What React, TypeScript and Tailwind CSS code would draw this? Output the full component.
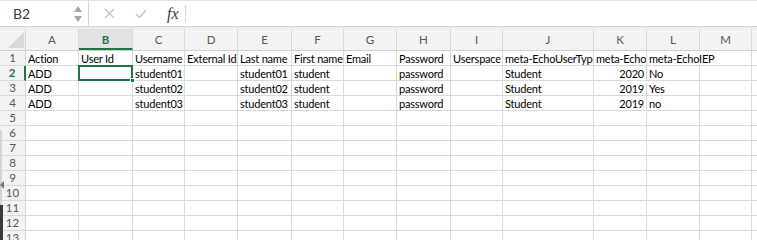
import React from 'react'

const cols = [
  { key: 'A', w: 53 },
  { key: 'B', w: 54 },
  { key: 'C', w: 52 },
  { key: 'D', w: 53 },
  { key: 'E', w: 54 },
  { key: 'F', w: 52 },
  { key: 'G', w: 53 },
  { key: 'H', w: 54 },
  { key: 'I', w: 52 },
  { key: 'J', w: 91 },
  { key: 'K', w: 53 },
  { key: 'L', w: 53 },
  { key: 'M', w: 52 },
  { key: 'N', w: 60 },
]

type Cell = { v: string; right?: boolean; spill?: boolean }

const data: Cell[][] = [
  [
    { v: 'Action' }, { v: 'User Id' }, { v: 'Username' }, { v: 'External Id' }, { v: 'Last name' },
    { v: 'First name' }, { v: 'Email' }, { v: 'Password' }, { v: 'Userspace' },
    { v: 'meta-EchoUserType' }, { v: 'meta-EchoGrade' }, { v: 'meta-EchoIEP', spill: true },
  ],
  [
    { v: 'ADD' }, { v: '' }, { v: 'student01' }, { v: '' }, { v: 'student01' }, { v: 'student' },
    { v: '' }, { v: 'password' }, { v: '' }, { v: 'Student' }, { v: '2020', right: true }, { v: 'No' },
  ],
  [
    { v: 'ADD' }, { v: '' }, { v: 'student02' }, { v: '' }, { v: 'student02' }, { v: 'student' },
    { v: '' }, { v: 'password' }, { v: '' }, { v: 'Student' }, { v: '2019', right: true }, { v: 'Yes' },
  ],
  [
    { v: 'ADD' }, { v: '' }, { v: 'student03' }, { v: '' }, { v: 'student03' }, { v: 'student' },
    { v: '' }, { v: 'password' }, { v: '' }, { v: 'Student' }, { v: '2019', right: true }, { v: 'no' },
  ],
]

const ROWS = 13

function FormulaBar() {
  return (
    <div className="flex h-[27px] border-b border-t border-[#d6d6d6] border-t-[#e4e4e4] bg-white">
      <div className="relative flex w-[89px] shrink-0 items-center border-r border-[#d6d6d6] pl-[13px] text-[14px] text-[#3a3a3a]">
        B2
        <div className="absolute right-[6px] top-[5px] flex flex-col gap-[4px]">
          <svg width="8" height="6" viewBox="0 0 8 6"><path d="M4 0 L8 6 L0 6 Z" fill="#a8a8a8" /></svg>
          <svg width="8" height="6" viewBox="0 0 8 6"><path d="M0 0 L8 0 L4 6 Z" fill="#a8a8a8" /></svg>
        </div>
      </div>
      <div className="flex items-center">
        <svg className="ml-[15px]" width="11" height="11" viewBox="0 0 11 11">
          <path d="M1 1 L10 10 M10 1 L1 10" stroke="#c4c4c4" strokeWidth="1.4" />
        </svg>
        <svg className="ml-[20px]" width="12" height="10" viewBox="0 0 12 10">
          <path d="M1 5 L4.5 8.5 L11 1" stroke="#c4c4c4" strokeWidth="1.4" fill="none" />
        </svg>
        <span className="ml-[20px] text-[16px] italic text-[#3a3a3a]" style={{ fontFamily: '"Liberation Serif", serif' }}>
          fx
        </span>
        <div className="ml-[6px] h-[17px] w-px bg-[#d6d6d6]" />
      </div>
    </div>
  )
}

function HeaderRow() {
  return (
    <div className="flex h-[22px] border-b border-[#cfcfcf] bg-[#f3f3f3]">
      <div className="relative w-[26px] shrink-0 border-r border-[#d4d4d4]">
        <svg className="absolute left-[8px] top-[3px]" width="16" height="16" viewBox="0 0 16 16">
          <path d="M16 0 L16 16 L0 16 Z" fill="#d9d9d9" />
        </svg>
      </div>
      {cols.map(c => (
        <div
          key={c.key}
          style={{ width: c.w }}
          className={`flex shrink-0 items-center justify-center overflow-hidden border-r border-[#d9d9d9] text-[11.5px] ${
            c.key === 'B'
              ? 'border-b-2 border-b-[#217346] bg-[#e3e3e3] pt-[2px] font-bold text-[#217346]'
              : 'text-[#555]'
          }`}
        >
          {c.key}
        </div>
      ))}
    </div>
  )
}

function Row({ n }: { n: number }) {
  const cells = data[n - 1] ?? []
  const sel = n === 2
  return (
    <div className="flex h-[15px]">
      <div
        className={`flex w-[26px] shrink-0 items-center justify-center border-b border-[#d9d9d9] bg-[#f3f3f3] text-[11.5px] ${
          sel ? 'border-r-2 border-r-[#217346] bg-[#e3e3e3] font-bold text-[#217346]' : 'border-r border-r-[#d4d4d4] text-[#555]'
        }`}
      >
        {n}
      </div>
      {cols.map((c, i) => {
        const cell = cells[i]
        const isSel = sel && c.key === 'B'
        return (
          <div
            key={c.key}
            style={{ width: c.w }}
            className={`relative flex shrink-0 items-center border-b border-[#d9d9d9] px-[2px] text-[11px] leading-none tracking-[-0.2px] text-black ${
              cell?.spill || isSel ? 'overflow-visible' : 'overflow-hidden'
            } ${cell?.spill ? '' : 'border-r border-r-[#d9d9d9]'} ${cell?.right ? 'justify-end' : ''} ${isSel ? 'z-10' : ''}`}
          >
            <span className="whitespace-nowrap">{cell?.v}</span>
            {isSel && (
              <>
                <div className="absolute -left-px -top-px bottom-[-1px] right-[-1px] border-2 border-[#217346]" />
                <div className="absolute bottom-[-3px] right-[-3px] h-[5px] w-[5px] border border-white bg-[#217346]" />
              </>
            )}
          </div>
        )
      })}
    </div>
  )
}

export default function App() {
  return (
    <div
      className="relative h-[240px] w-[757px] overflow-hidden bg-white"
      style={{ fontFamily: 'Lato, "Liberation Sans", sans-serif' }}
    >
      <FormulaBar />
      <div className="h-[2px] bg-[#ececec]" />
      <HeaderRow />
      {Array.from({ length: ROWS }, (_, i) => (
        <Row key={i} n={i + 1} />
      ))}
      <div className="absolute left-0 top-[130px] h-[75px] w-[2px] bg-[#d4d4d4]" />
      <svg className="absolute left-0 top-[181px]" width="4" height="8" viewBox="0 0 4 8">
        <path d="M4 0 L0 4 L4 8 Z" fill="#777" />
      </svg>
      <div className="absolute bottom-0 left-0 top-[205px] w-[3px] bg-[#3a3a3a]" />
    </div>
  )
}
